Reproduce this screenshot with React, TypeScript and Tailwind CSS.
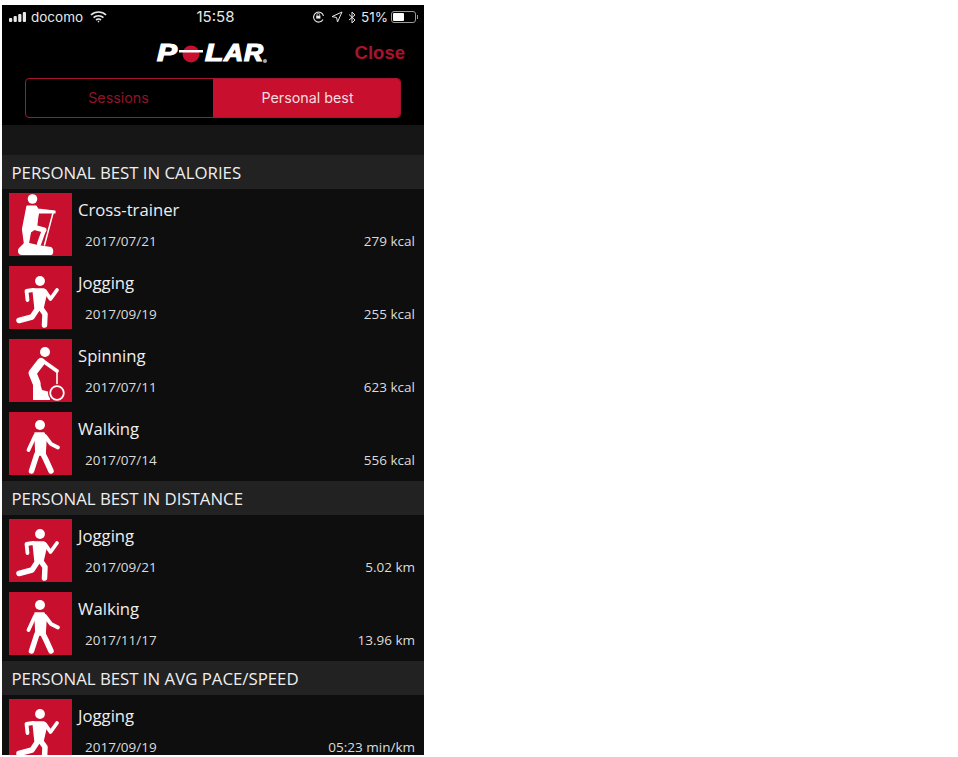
import React from 'react';

const sans = "font-['Open_Sans',sans-serif]";

const CrossTrainerIcon = () => (
  <svg viewBox="0 0 63 63" className="w-full h-full" fill="none" stroke="#fff" strokeLinecap="round" strokeLinejoin="round">
    <circle cx="23.5" cy="6" r="4.8" fill="#fff" stroke="none" />
    <path d="M18 13h9l2 3 17 2 0 2-16.500 0 -1 6 -1 9 -6 4 -2 11 -4 1 -2-15 z" fill="#fff" strokeWidth="1.200" />
    <path d="M24 34l11 3" strokeWidth="5" />
    <path d="M35 37l-5 14" strokeWidth="4.200" />
    <path d="M44 20l-8.500 32" strokeWidth="1.500" />
    <path d="M13 62c-5 0-5-6-2-8l5-5 13 3 13 2c3 1 3 8 0 8z" fill="#fff" stroke="none" />
  </svg>
);

const JoggingIcon = () => (
  <svg viewBox="0 0 63 63" className="w-full h-full" fill="none" stroke="#fff" strokeLinecap="round" strokeLinejoin="round">
    <circle cx="31" cy="15" r="4.900" fill="#fff" stroke="none" />
    <path d="M24 23h11l2 6-3 13h-8z" fill="#fff" strokeWidth="1.500" />
    <path d="M24 24l-6.500 1 1 9" strokeWidth="3.800" />
    <path d="M36 25l5.500 8 6.500-9" strokeWidth="3.800" />
    <path d="M31 41l5 7-.500 11" strokeWidth="5.500" />
    <path d="M29 42l-6 9-13 3.500" strokeWidth="5.500" />
  </svg>
);

const SpinningIcon = () => (
  <svg viewBox="0 0 63 63" className="w-full h-full" fill="none" stroke="#fff" strokeLinecap="round" strokeLinejoin="round">
    <circle cx="36" cy="13" r="5" fill="#fff" stroke="none" />
    <path d="M32 23L23.500 34l4 10" strokeWidth="8" />
    <path d="M34 22l14 10" strokeWidth="3.800" />
    <path d="M48 32v14" strokeWidth="1.600" />
    <path d="M24 61V44h7l2 7 8 2v8z" fill="#fff" stroke="none" />
    <circle cx="48" cy="54" r="9" fill="#c8102e" stroke="none" />
    <circle cx="48" cy="54" r="6.800" stroke="#fff" strokeWidth="1.800" />
  </svg>
);

const WalkingIcon = () => (
  <svg viewBox="0 0 63 63" className="w-full h-full" fill="none" stroke="#fff" strokeLinecap="round" strokeLinejoin="round">
    <circle cx="31" cy="13" r="5" fill="#fff" stroke="none" />
    <path d="M26 21h9l2 6-1 16h-9z" fill="#fff" strokeWidth="1.500" />
    <path d="M26 24l-6.500 14" strokeWidth="3.800" />
    <path d="M36 24l6 8 7 3.500" strokeWidth="3.800" />
    <path d="M28 42l-5.500 17" strokeWidth="5.500" />
    <path d="M34 42l3 6 5 11" strokeWidth="5.500" />
  </svg>
);

type Row = { icon: React.ReactNode; name: string; date: string; value: string };

const sections: { title: string; rows: Row[] }[] = [
  {
    title: 'PERSONAL BEST IN CALORIES',
    rows: [
      { icon: <CrossTrainerIcon />, name: 'Cross-trainer', date: '2017/07/21', value: '279 kcal' },
      { icon: <JoggingIcon />, name: 'Jogging', date: '2017/09/19', value: '255 kcal' },
      { icon: <SpinningIcon />, name: 'Spinning', date: '2017/07/11', value: '623 kcal' },
      { icon: <WalkingIcon />, name: 'Walking', date: '2017/07/14', value: '556 kcal' },
    ],
  },
  {
    title: 'PERSONAL BEST IN DISTANCE',
    rows: [
      { icon: <JoggingIcon />, name: 'Jogging', date: '2017/09/21', value: '5.02 km' },
      { icon: <WalkingIcon />, name: 'Walking', date: '2017/11/17', value: '13.96 km' },
    ],
  },
  {
    title: 'PERSONAL BEST IN AVG PACE/SPEED',
    rows: [{ icon: <JoggingIcon />, name: 'Jogging', date: '2017/09/19', value: '05:23 min/km' }],
  },
];

const StatusBar = () => (
  <div className="h-[24px] flex items-center justify-between pl-[7px] pr-[6px] text-[13.5px] text-[#e8e8e8] font-['Inter',sans-serif]">
    <div className="w-[120px] flex items-center gap-[3px]">
      <svg width="20" height="10" viewBox="0 0 20 10" fill="#e8e8e8">
        <rect x="0" y="6" width="3.200" height="4" rx="1" />
        <rect x="4.600" y="4" width="3.200" height="6" rx="1" />
        <rect x="9.200" y="2" width="3.200" height="8" rx="1" />
        <rect x="13.800" y="0" width="3.200" height="10" rx="1" />
      </svg>
      <span className="-ml-[1px]">docomo</span>
      <svg width="17" height="12" viewBox="0 0 17 12" fill="none" stroke="#e8e8e8" strokeWidth="1.700" className="ml-[4px]">
        <path d="M1 4c4-4 11-4 15 0" />
        <path d="M3.600 6.600c2.600-2.500 7.200-2.500 9.800 0" />
        <path d="M6.100 9c1.200-1.100 3.600-1.100 4.800 0" />
        <circle cx="8.500" cy="10.600" r="0.800" fill="#e8e8e8" stroke="none" />
      </svg>
    </div>
    <span className="text-[15px] ml-[4px]">15:58</span>
    <div className="w-[120px] flex items-center justify-end gap-[5px]">
      <svg width="13" height="12" viewBox="0 0 13 12" fill="none" stroke="#e8e8e8" strokeWidth="1.100" className="-ml-[6px]">
        <path d="M11 8.500A5 5 0 1 1 11.500 5" />
        <rect x="4.200" y="4.600" width="4.200" height="3" fill="#e8e8e8" stroke="none" />
        <path d="M5 4.600V3.600a1.300 1.300 0 0 1 2.600 0v1" strokeWidth="0.800" />
      </svg>
      <svg width="12" height="12" viewBox="0 0 12 12" fill="none" stroke="#e8e8e8" strokeWidth="1" className="ml-[1px]">
        <path d="M11 1L1 5.600l4.600.9.900 4.500z" strokeLinejoin="round" />
      </svg>
      <svg width="8" height="13" viewBox="0 0 8 13" fill="none" stroke="#e8e8e8" strokeWidth="1">
        <path d="M1 3.500l6 5.500-3 3V1l3 3-6 5" />
      </svg>
      <span className="text-[13.5px] -mr-[1px]">51%</span>
      <div className="flex items-center -ml-[1px]">
        <div className="w-[25px] h-[12px] rounded-[3px] border border-[#9a9a9a] p-[1px]">
          <div className="w-[51%] h-full bg-white rounded-[1px]" />
        </div>
        <div className="w-[1px] h-[4px] bg-[#9a9a9a] ml-[1px]" />
      </div>
    </div>
  </div>
);

const PolarLogo = () => (
  <div className="flex items-center h-[20px] text-white italic font-black font-['Liberation_Sans',sans-serif] text-[23px] leading-none [-webkit-text-stroke:1.2px_white]">
    <span className="w-[24px] scale-x-[1.3] origin-left">P</span>
    <svg width="24" height="18" viewBox="0 0 24 18" className="-ml-[2px]">
      <circle cx="12" cy="9" r="8.500" fill="#c8102e" />
      <rect x="0" y="5" width="24" height="2.500" fill="#fff" />
    </svg>
    <span className="w-[19px] scale-x-[1.3] origin-left ml-[2px]">L</span>
    <span className="w-[20px] scale-x-[1.15] origin-left">A</span>
    <span className="w-[18px] scale-x-[1.15] origin-left">R</span>
    <span className="w-[4px] h-[4px] rounded-full bg-[#aaaaaa] self-end ml-[1px] mb-[1px]" />
  </div>
);

const Header = () => (
  <div className="h-[96px] bg-black">
    <div className="relative h-[49px] flex items-center justify-center pr-[2px]">
      <PolarLogo />
      <span className="absolute right-[19px] top-[10px] text-[#a8132f] text-[18.5px] font-bold font-['Liberation_Sans',sans-serif]">
        Close
      </span>
    </div>
    <div className="mx-[23px] h-[40px] flex rounded-[4px] border border-[#a8132f] overflow-hidden text-[14.300px] font-['Inter',sans-serif]">
      <div className="w-[187px] flex items-center justify-center text-[#8f1428] pr-[2px]">Sessions</div>
      <div className="flex-1 flex items-center justify-center bg-[#c8102e] text-[#f2dcdf] pl-[2px]">Personal best</div>
    </div>
  </div>
);

const App: React.FC = () => {
  return (
    <div className="min-h-screen bg-white">
      <div className={`ml-[2px] pt-[5px] w-[422px] ${sans}`}>
        <div className="h-[750px] bg-[#0e0e0f] overflow-hidden">
          <div className="bg-black">
            <StatusBar />
            <Header />
          </div>
          <div className="h-[30px] bg-[#161617]" />
          {sections.map((section) => (
            <div key={section.title}>
              <div className="h-[34px] bg-[#222223] pl-[9.500px] pt-[2px] flex items-center text-[16.800px] text-[#efefef]">
                {section.title}
              </div>
              {section.rows.map((row) => (
                <div key={row.name + row.date} className="h-[73px] pl-[7px] pr-[9px] pt-[4px] flex">
                  <div className="w-[63px] h-[63px] bg-[#c8102e] shrink-0">{row.icon}</div>
                  <div className="flex-1 pl-[6px] flex flex-col">
                    <div className="h-[33px] flex items-center text-[16.700px] text-[#efefef]">{row.name}</div>
                    <div className="flex justify-between items-center pl-[7px] h-[30px] text-[13.500px] text-[#dcdcdc]">
                      <span>{row.date}</span>
                      <span>{row.value}</span>
                    </div>
                  </div>
                </div>
              ))}
            </div>
          ))}
        </div>
      </div>
    </div>
  );
};

export default App;
